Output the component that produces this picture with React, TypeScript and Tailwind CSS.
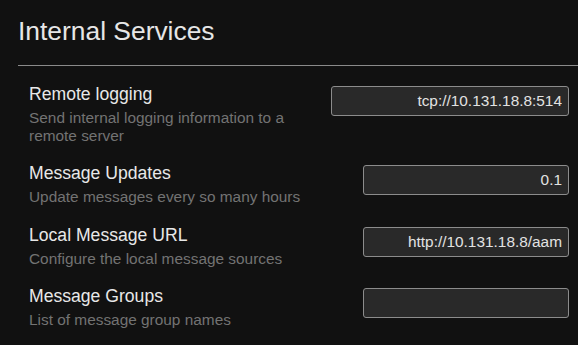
import React from "react";

type Row = { label: string; desc: string; value: string; width: string };

const rows: Row[] = [
  {
    label: "Remote logging",
    desc: "Send internal logging information to a remote server",
    value: "tcp://10.131.18.8:514",
    width: "w-[238px]",
  },
  {
    label: "Message Updates",
    desc: "Update messages every so many hours",
    value: "0.1",
    width: "w-[206px]",
  },
  {
    label: "Local Message URL",
    desc: "Configure the local message sources",
    value: "http://10.131.18.8/aam",
    width: "w-[206px]",
  },
  {
    label: "Message Groups",
    desc: "List of message group names",
    value: "",
    width: "w-[206px]",
  },
];

export default function App() {
  return (
    <div className="min-h-screen bg-[#111111] pl-[18px] font-['Liberation_Sans',Arial,sans-serif]">
      <div className="border-b border-[#8a8a8a] pt-[15px] pb-[18px]">
        <h1 className="text-[26.4px] leading-[32px] font-normal text-[#e6e6e6]">
          Internal Services
        </h1>
      </div>
      <div className="flex flex-col gap-[18px] pt-[17px] pl-[11px] pr-[9px]">
        {rows.map((r) => (
          <div key={r.label} className="flex items-start justify-between">
            <div className="min-w-0 flex-1 pr-[24px]">
              <div className="text-[17.6px] leading-[22px] text-[#e8e8e8]">{r.label}</div>
              <div className="mt-[4px] text-[15.4px] leading-[17.6px] text-[#737373]">
                {r.desc}
              </div>
            </div>
            <input
              readOnly
              value={r.value}
              className={`${r.width} mt-[3px] h-[30px] shrink-0 rounded-[3px] border border-[#8c8c8c] bg-[#292929] px-[6px] text-right text-[15.4px] text-[#e2e2e2] outline-none`}
            />
          </div>
        ))}
      </div>
    </div>
  );
}
